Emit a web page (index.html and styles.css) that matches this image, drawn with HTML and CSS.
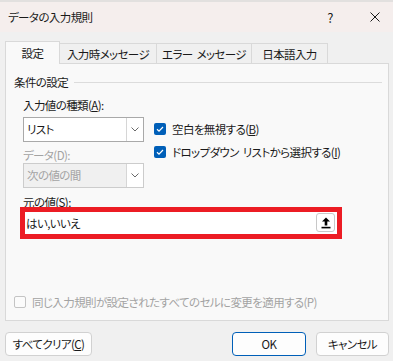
FILE: index.html
```html
<!DOCTYPE html>
<html lang="ja">
<head>
    <meta charset="UTF-8">
    <meta name="viewport" content="width=device-width, initial-scale=1.0">
    <title>データの入力規則</title>
    <link rel="stylesheet" href="styles.css">
</head>
<body>
    <div class="dialog">
        <div class="titlebar">
            <span class="title">データの入力規則</span>
            <span class="help">?</span>
            <svg class="close" width="10" height="10" viewBox="0 0 10 10">
                <path d="M0.5 0.5 L9.5 9.5 M9.5 0.5 L0.5 9.5" stroke="#1a1a1a" stroke-width="1" fill="none"/>
            </svg>
        </div>

        <div class="tabs">
            <div class="tab tab-settings active">設定</div>
            <div class="tab tab-input">入力時メッセージ</div>
            <div class="tab tab-error">エラー メッセージ</div>
            <div class="tab tab-ime">日本語入力</div>
        </div>

        <div class="panel">
            <div class="legend">
                <span>条件の設定</span>
                <span class="legend-line"></span>
            </div>

            <div class="settings">
                <div class="left-col">
                    <div class="label">入力値の種類(<u>A</u>):</div>
                    <div class="combo">
                        <span class="combo-value">リスト</span>
                        <span class="combo-arrow">
                            <svg width="8" height="5" viewBox="0 0 8 5"><polyline points="0.5,0.5 4,4 7.5,0.5" fill="none" stroke="#6a6a6a" stroke-width="1"/></svg>
                        </span>
                    </div>
                    <div class="label label-data disabled">データ(D):</div>
                    <div class="combo combo-disabled">
                        <span class="combo-value">次の値の間</span>
                        <span class="combo-arrow">
                            <svg width="8" height="5" viewBox="0 0 8 5"><polyline points="0.5,0.5 4,4 7.5,0.5" fill="none" stroke="#6a6a6a" stroke-width="1"/></svg>
                        </span>
                    </div>
                </div>
                <div class="right-col">
                    <div class="check-row">
                        <span class="checkbox checked">
                            <svg width="12" height="12" viewBox="0 0 12 12"><polyline points="3,6.3 5,8.2 9,4" fill="none" stroke="#fff" stroke-width="1.2"/></svg>
                        </span>
                        <span>空白を無視する(<u>B</u>)</span>
                    </div>
                    <div class="check-row">
                        <span class="checkbox checked">
                            <svg width="12" height="12" viewBox="0 0 12 12"><polyline points="3,6.3 5,8.2 9,4" fill="none" stroke="#fff" stroke-width="1.2"/></svg>
                        </span>
                        <span>ドロップダウン リストから選択する(<u>I</u>)</span>
                    </div>
                </div>
            </div>

            <div class="label source-label">元の値(<u>S</u>):</div>
            <div class="highlight">
                <div class="source-input">
                    <span class="source-value">はい,いいえ</span>
                    <span class="upload-btn">
                        <svg width="10" height="12" viewBox="0 0 10 12">
                            <path d="M5 0.5 L9 4.6 H6.3 V8.5 H3.7 V4.6 H1 Z" fill="#000"/>
                            <rect x="0.5" y="9.8" width="9" height="1.6" fill="#000"/>
                        </svg>
                    </span>
                </div>
            </div>

            <div class="check-row apply-row disabled">
                <span class="checkbox"></span>
                <span>同じ入力規則が設定されたすべてのセルに変更を適用する(P)</span>
            </div>
        </div>

        <div class="footer">
            <button class="btn btn-clear">すべてクリア(<u>C</u>)</button>
            <span class="spacer"></span>
            <button class="btn btn-ok">OK</button>
            <button class="btn btn-cancel">キャンセル</button>
        </div>
    </div>
</body>
</html>
```

FILE: styles.css
```css
body {
    margin: 0;
    background-color: #f0f0f0;
    font-family: "Noto Sans CJK JP", "Noto Sans", sans-serif;
    font-size: 11.5px;
    letter-spacing: -0.6px;
    word-spacing: 2px;
    color: #1a1a1a;
    font-feature-settings: "palt";
}
.dialog {
    width: 393px;
    height: 361px;
    overflow: hidden;
    background-color: #f0f0f0;
}
.titlebar {
    display: flex;
    align-items: center;
    height: 30px;
    border-top: 2px solid #e2e0df;
    background-color: #f5eeed;
}
.title {
    flex: 1;
    padding-left: 8px;
    line-height: 16px;
}
.help {
    width: 10px;
    text-align: center;
    font-size: 13px;
    margin-right: 35px;
}
.close {
    margin-right: 13px;
}
.tabs {
    display: flex;
    align-items: flex-end;
    padding: 9px 0 0 5px;
    height: 22px;
}
.tab {
    height: 20px;
    line-height: 20px;
    border: 1px solid #d9d9d9;
    border-bottom: none;
    margin-left: -1px;
    box-sizing: border-box;
    text-align: center;
    white-space: nowrap;
}
.tab:first-child {
    margin-left: 0;
}
.tab.active {
    position: relative;
    z-index: 1;
    height: 23px;
    line-height: 22px;
    margin-bottom: -1px;
    background-color: #f9f9f9;
}
.tab-settings {
    width: 55px;
}
.tab-input {
    width: 98px;
}
.tab-error {
    width: 96px;
}
.tab-ime {
    width: 77px;
}
.panel {
    display: flex;
    flex-direction: column;
    height: 258px;
    margin: 0 4px 0 5px;
    padding: 10px 6px 10px 8px;
    box-sizing: border-box;
    border: 1px solid #d9d9d9;
    background-color: #f9f9f9;
}
.legend {
    display: flex;
    align-items: center;
    gap: 6px;
    line-height: 16px;
}
.legend-line {
    flex: 1;
    height: 1px;
    background-color: #dcdcdc;
}
.settings {
    display: flex;
    padding-left: 9px;
    margin-top: 7px;
}
.left-col {
    width: 121px;
}
.label {
    line-height: 16px;
}
.disabled {
    color: #a3a3a3;
}
.label-data {
    margin-top: 5px;
}
.combo {
    display: flex;
    height: 25px;
    margin-top: 4px;
    box-sizing: border-box;
    border: 1px solid #a9a9a9;
    background-color: #fff;
}
.combo-disabled {
    margin-top: 0;
    border-color: #cccccc;
    background-color: #f0f0f0;
    color: #a3a3a3;
}
.combo-value {
    flex: 1;
    padding-left: 3px;
    line-height: 23px;
}
.combo-arrow {
    display: flex;
    align-items: center;
    justify-content: center;
    width: 16px;
    border-left: 1px solid #d6d6d6;
    background-color: #fff;
}
.right-col {
    margin-left: 10px;
    padding-top: 20px;
}
.check-row {
    display: flex;
    align-items: center;
    gap: 6px;
    height: 23px;
    white-space: nowrap;
}
.checkbox {
    display: flex;
    width: 12px;
    height: 12px;
    box-sizing: border-box;
    border-radius: 2px;
    border: 1px solid #c4c4c4;
    background-color: #fbfbfb;
}
.checkbox.checked {
    border: none;
    background-color: #005fb8;
}
.source-label {
    margin-top: 6px;
    padding-left: 9px;
}
.highlight {
    width: 322px;
    height: 32px;
    margin: -3px 0 0 6px;
    box-sizing: border-box;
    border: 5px solid #ec1c24;
}
.source-input {
    display: flex;
    align-items: center;
    height: 22px;
    background-color: #fff;
}
.source-value {
    flex: 1;
    padding-left: 1px;
}
.upload-btn {
    display: flex;
    align-items: center;
    justify-content: center;
    width: 19px;
    height: 19px;
    margin: 0 2px 1px 0;
    box-sizing: border-box;
    border: 1px solid #c8c8c8;
    border-radius: 3px;
    background-color: #fff;
}
.apply-row {
    margin-top: auto;
    height: 16px;
}
.footer {
    display: flex;
    margin: 11px 4px 0 5px;
    gap: 10px;
}
.spacer {
    flex: 1;
}
.btn {
    height: 24px;
    padding: 0;
    border: 1px solid #d1d1d1;
    border-radius: 4px;
    background-color: #fdfdfd;
    font-family: inherit;
    font-size: 11.5px;
    letter-spacing: -0.6px;
    color: #1a1a1a;
    font-feature-settings: "palt";
}
.btn-clear {
    width: 87px;
}
.btn-ok {
    width: 74px;
    border-color: #005fb8;
}
.btn-cancel {
    width: 73px;
}
```
